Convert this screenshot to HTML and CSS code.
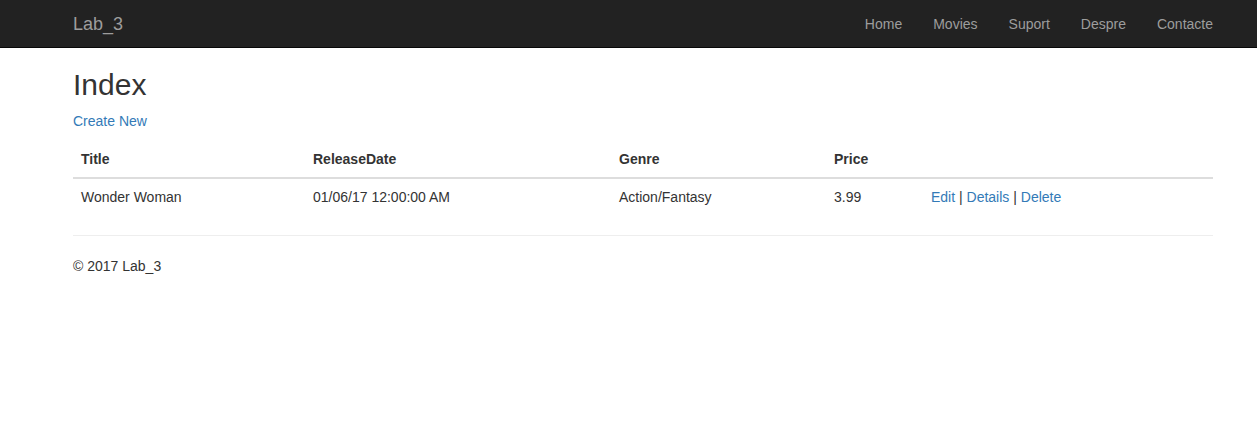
FILE: index.html
```html
<!DOCTYPE html>
<html>
<head>
<meta charset="utf-8">
<title>Index - Lab_3</title>
<link rel="stylesheet" href="styles.css">
</head>
<body>
<header class="navbar">
  <div class="container nav-inner">
    <a class="brand" href="#">Lab_3</a>
    <ul class="nav">
      <li><a href="#">Home</a></li>
      <li><a href="#">Movies</a></li>
      <li><a href="#">Suport</a></li>
      <li><a href="#">Despre</a></li>
      <li><a href="#">Contacte</a></li>
    </ul>
  </div>
</header>
<main class="container body-content">
  <h2 class="title">Index</h2>
  <p class="para"><a href="#">Create New</a></p>
  <table class="table">
    <colgroup>
      <col class="c1"><col class="c2"><col class="c3"><col class="c4"><col class="c5">
    </colgroup>
    <thead>
      <tr>
        <th>Title</th>
        <th>ReleaseDate</th>
        <th>Genre</th>
        <th>Price</th>
        <th></th>
      </tr>
    </thead>
    <tbody>
      <tr>
        <td>Wonder Woman</td>
        <td>01/06/17 12:00:00 AM</td>
        <td>Action/Fantasy</td>
        <td>3.99</td>
        <td><a href="#">Edit</a> | <a href="#">Details</a> | <a href="#">Delete</a></td>
      </tr>
    </tbody>
  </table>
  <hr class="rule">
  <footer>
    <p class="para">&copy; 2017 Lab_3</p>
  </footer>
</main>
</body>
</html>
```

FILE: styles.css
```css
* { box-sizing: border-box; }
html, body { margin: 0; padding: 0; }
body {
  font-family: "Liberation Sans", Arial, Helvetica, sans-serif;
  font-size: 14px;
  line-height: 20px;
  color: #333;
  background: #fff;
}
a { color: #337ab7; text-decoration: none; }

.container {
  width: 1140px;
  margin-left: 73px;
}

.navbar {
  background: #222;
  border-bottom: 1px solid #080808;
  height: 48px;
}
.nav-inner {
  height: 47px;
  display: flex;
  align-items: center;
  justify-content: space-between;
}
.brand {
  color: #9d9d9d;
  font-size: 18px;
  line-height: 20px;
}
.nav {
  list-style: none;
  margin: 0 -15.5px 0 0;
  padding: 0;
  display: flex;
}
.nav a {
  display: block;
  padding: 0 15.5px;
  color: #9d9d9d;
  line-height: 20px;
}

.title {
  font-size: 30px;
  font-weight: 500;
  line-height: 33px;
  margin: 20px 0 10px;
}
.para { margin: 0 0 10px; }

.table {
  width: 100%;
  border-collapse: collapse;
  border-spacing: 0;
  margin-bottom: 20px;
}
.c1 { width: 232px; }
.c2 { width: 306px; }
.c3 { width: 215px; }
.c4 { width: 97px; }
.table th, .table td {
  padding: 8px;
  line-height: 20px;
  text-align: left;
  vertical-align: top;
}
.table th {
  font-weight: bold;
  border-bottom: 2px solid #ddd;
  vertical-align: bottom;
}
.table td { border-top: 1px solid #ddd; }

.rule {
  margin: 20px 0;
  border: 0;
  border-top: 1px solid #eee;
  height: 0;
}
```
